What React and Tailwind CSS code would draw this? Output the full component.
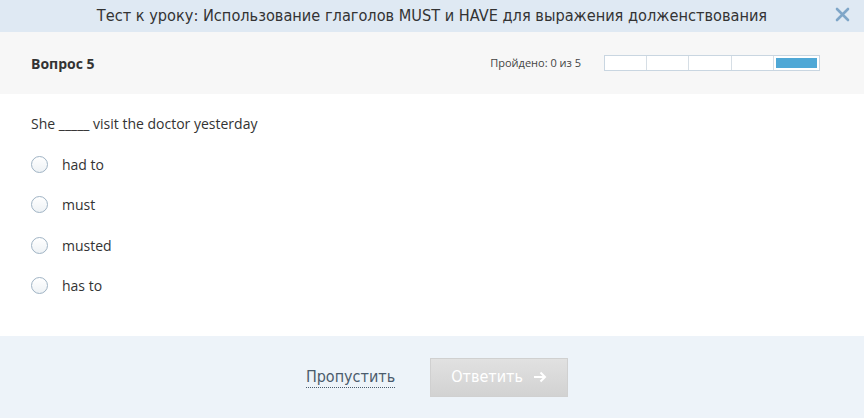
import React, { useState } from 'react';

const OPTIONS = ['had to', 'must', 'musted', 'has to'];

export default function App() {
  const [picked, setPicked] = useState(null);

  return (
    <div className="w-[864px] h-[418px] flex flex-col bg-white font-['Open_Sans',sans-serif] text-[#333]">
      {/* Header */}
      <div className="h-[32px] bg-[#dfe9f3] flex items-center justify-center relative shrink-0">
        <h1 className="text-[16.2px] text-[#333] font-['Liberation_Sans_Narrow','DejaVu_Sans_Condensed',sans-serif]">
          Тест к уроку: Использование глаголов MUST и HAVE для выражения долженствования
        </h1>
        <button className="absolute right-[14px] top-[7px] text-[#7fa6c8]">
          <svg width="15" height="15" viewBox="0 0 15 15">
            <path d="M2 2 L13 13 M13 2 L2 13" stroke="currentColor" strokeWidth="2.6" strokeLinecap="round" />
          </svg>
        </button>
      </div>

      {/* Question bar */}
      <div className="h-[62px] bg-[#f7f7f7] flex items-center justify-between pl-[31px] pr-[44px] shrink-0">
        <span className="text-[14px] font-bold text-[#333]">Вопрос 5</span>
        <div className="flex items-center gap-[23px]">
          <span className="text-[11px] text-[#444]">Пройдено: 0 из 5</span>
          <div className="flex w-[216px] h-[16px] border border-[#c9d6e1] bg-white">
            {[0, 1, 2, 3].map((i) => (
              <div key={i} className="flex-1 border-r border-[#d6dee5]" />
            ))}
            <div className="flex-1 p-[2px]">
              <div className="w-full h-full bg-[#4fa8d6]" />
            </div>
          </div>
        </div>
      </div>

      {/* Body */}
      <div className="flex-1 pl-[31px] pt-[20px]">
        <p className="text-[14px] text-[#333] leading-[20px]">She _____ visit the doctor yesterday</p>
        <div className="mt-[10px] flex flex-col">
          {OPTIONS.map((o, i) => (
            <label key={o} className="flex items-center h-[40.5px] cursor-pointer" onClick={() => setPicked(i)}>
              <span className="w-[17px] h-[17px] rounded-full border border-[#9fb3c4] bg-gradient-to-b from-white to-[#eef2f5] flex items-center justify-center">
                {picked === i && <span className="w-[7px] h-[7px] rounded-full bg-[#4fa8d6]" />}
              </span>
              <span className="ml-[14px] text-[14px] text-[#333]">{o}</span>
            </label>
          ))}
        </div>
      </div>

      {/* Footer */}
      <div className="h-[82px] bg-[#edf3f9] flex items-center justify-center gap-[35px] pl-[10px] shrink-0 font-['Liberation_Sans_Narrow','DejaVu_Sans_Condensed',sans-serif]">
        <a className="text-[16px] text-[#4a5b6c] border-b border-dotted border-[#4a5b6c] leading-[21px] cursor-pointer">
          Пропустить
        </a>
        <button className="w-[138px] h-[39px] bg-gradient-to-b from-[#e1e1e1] to-[#d2d2d2] border border-[#d0d0d0] text-white text-[16px] flex items-center justify-center gap-[10px]">
          <span>Ответить</span>
          <svg width="14" height="12" viewBox="0 0 14 12">
            <path d="M1 6 H12 M7.5 1.5 L12 6 L7.5 10.5" stroke="currentColor" strokeWidth="2" fill="none" />
          </svg>
        </button>
      </div>
    </div>
  );
}
